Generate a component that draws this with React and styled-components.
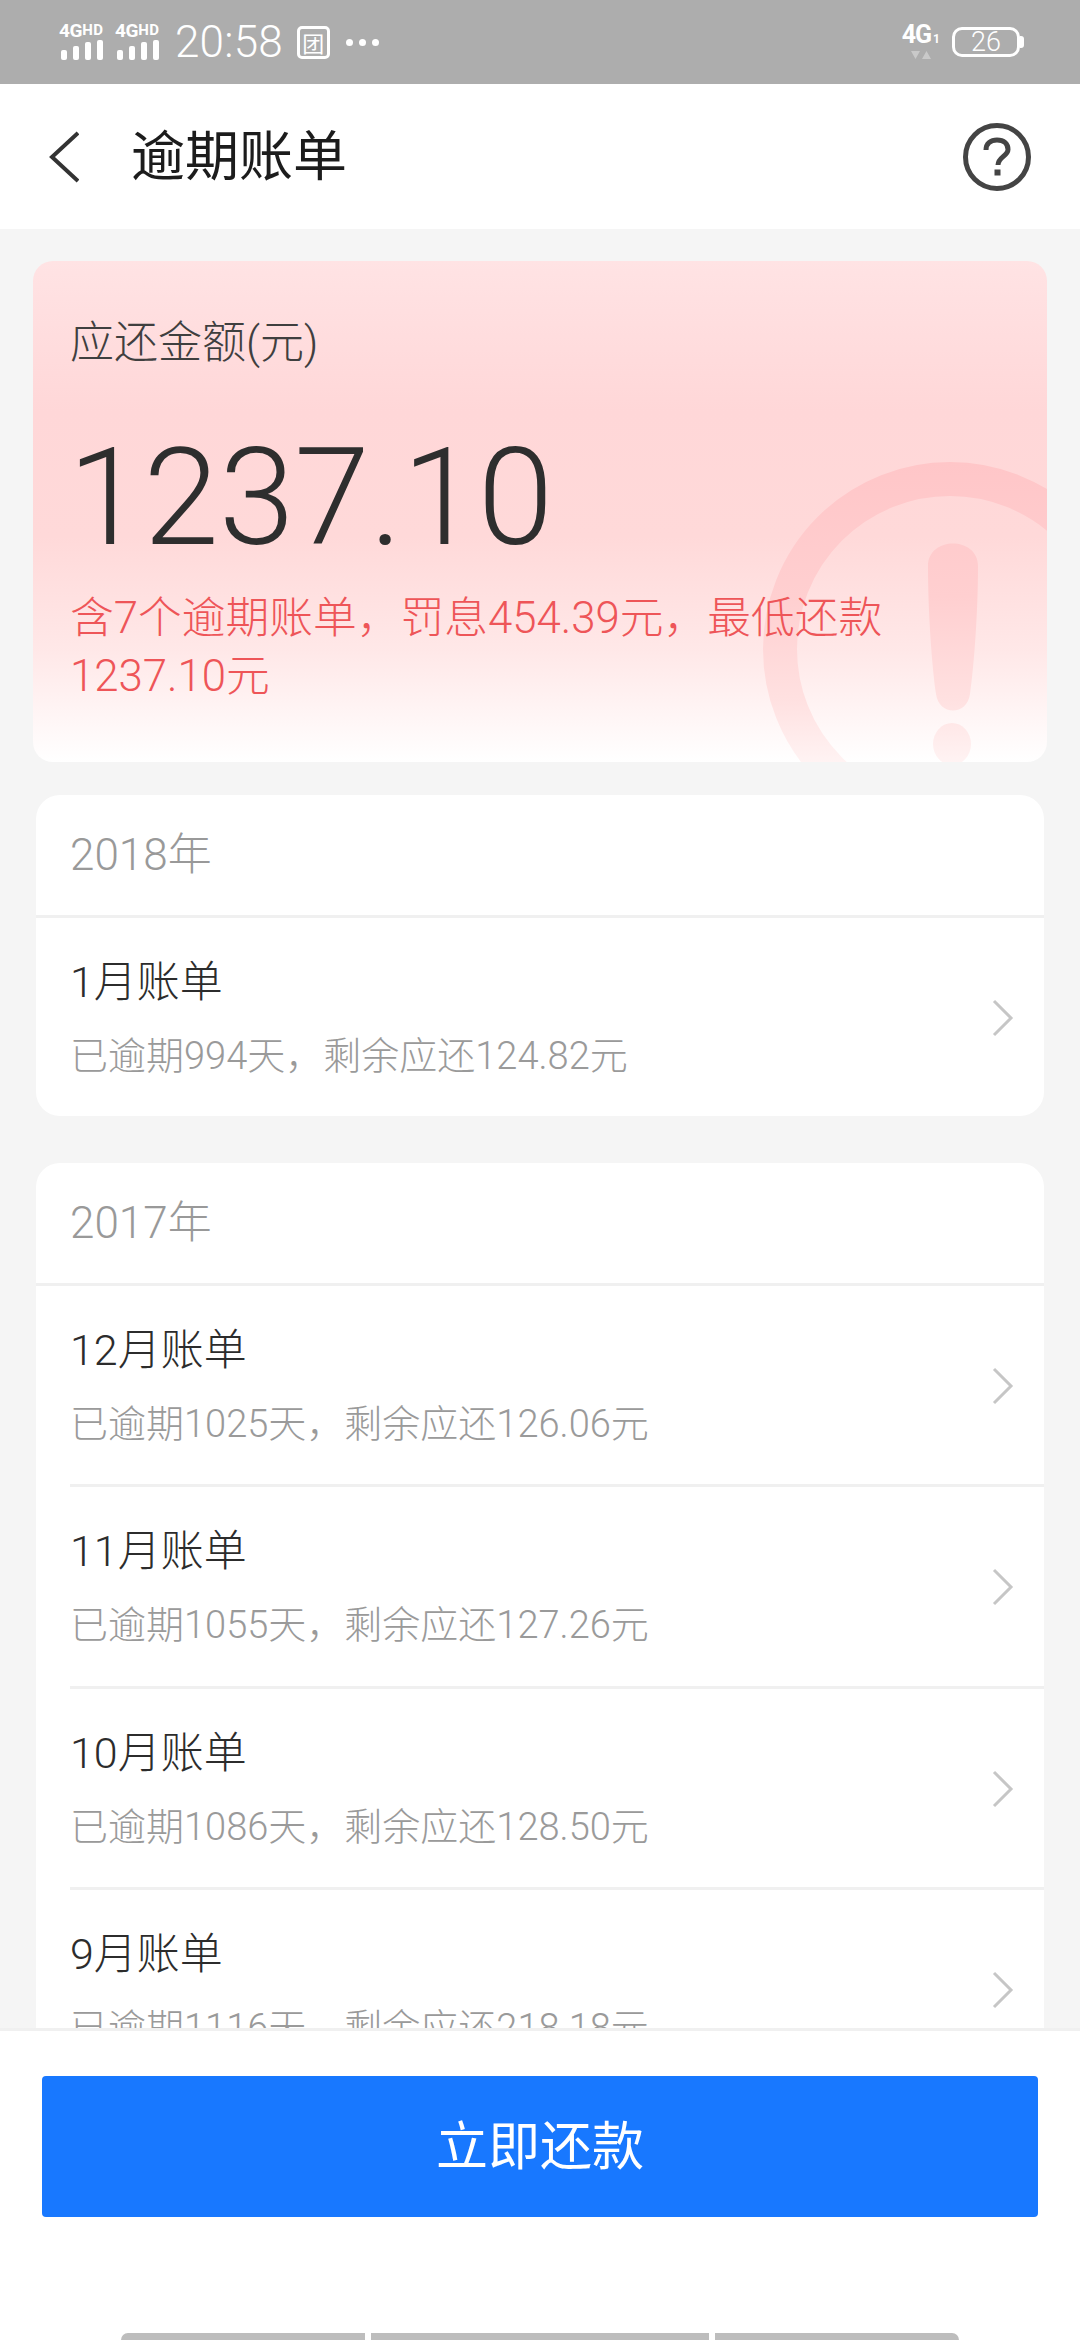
import React from "react";
import styled, { createGlobalStyle } from "styled-components";

const CJK = `"Roboto", "Noto Sans CJK SC", sans-serif`;

const Global = createGlobalStyle`
  html, body { margin: 0; padding: 0; background: #f5f5f5; }
  * { box-sizing: border-box; }
`;

const Screen = styled.div`
  width: 1080px; height: 2340px; display: flex; flex-direction: column;
  overflow: hidden; background: #f5f5f5; font-family: ${CJK};
`;

/* status bar */
const StatusBar = styled.div`
  height: 84px; flex: none; background: #adadad; color: #fff;
  display: flex; align-items: center; justify-content: space-between; padding: 0 60px 0 59px;
`;
const StatusGroup = styled.div`display: flex; align-items: center;`;
const SignalBox = styled.div`
  width: 45px; margin-right: 11px; display: flex; flex-direction: column; margin-top: -4px;
`;
const SignalLabel = styled.div`
  font: 700 19px/18px "Roboto", sans-serif; white-space: nowrap; letter-spacing: -0.3px;
  & > span { font-size: 15px; vertical-align: 2px; letter-spacing: 0.4px; }
`;
const SignalBars = styled.div`display: flex; gap: 6px; align-items: flex-end; height: 20px; padding-left: 2px;`;
const SignalBar = styled.div`width: 6px; height: ${p => p.$h}px; border-radius: 2px; background: #fff;`;
const Time = styled.div`
  font: 300 44px/1 "Roboto", sans-serif; margin-left: 4px; margin-right: 14px; letter-spacing: 0.2px;
`;
const AppBadge = styled.div`
  width: 33px; height: 33px; border: 3px solid #fff; border-radius: 5px; margin-right: 16px;
  display: flex; align-items: center; justify-content: center;
  font: 400 22px/1 "Noto Sans CJK SC", sans-serif;
`;
const Dots = styled.div`display: flex; gap: 6px;`;
const Dot = styled.div`width: 7px; height: 7px; border-radius: 50%; background: #fff;`;
const NetBox = styled.div`display: flex; flex-direction: column; align-items: center; margin-right: 12px;`;
const NetLabel = styled.div`
  font: 700 25px/22px "Roboto", sans-serif; letter-spacing: -1px;
  & > span { font-size: 12px; margin-left: 2px; letter-spacing: 0; }
`;
const Battery = styled.div`
  width: 68px; height: 30px; border: 3px solid #fff; border-radius: 10px; position: relative;
  display: flex; align-items: center; justify-content: center;
  font: 300 27px/1 "Roboto", sans-serif;
  &::after {
    content: ""; position: absolute; right: -7px; top: 6px; width: 4px; height: 12px;
    background: #fff; border-radius: 0 3px 3px 0;
  }
`;

/* header */
const Header = styled.header`
  height: 145px; flex: none; background: #fff; display: flex; align-items: center;
  padding: 0 49px 0 49px;
`;
const HeaderTitle = styled.h1`
  flex: 1; margin: 0 0 0 52px; font: 400 54px/1 "Noto Sans CJK SC", sans-serif; color: #1c1c1c;
  position: relative; top: -4px;
`;

/* content */
const Content = styled.main`flex: 1; min-height: 0; overflow: hidden; padding: 32px 33px 0;`;
const Hero = styled.section`
  position: relative; overflow: hidden; height: 501px; border-radius: 20px; padding: 56px 37px 0;
  background: linear-gradient(180deg, #ffe3e4 0%, #ffd7d8 30%, #ffd9d9 55%, #ffe8e8 78%, #ffffff 100%);
`;
const HeroMark = styled.svg`position: absolute; right: 0; bottom: 0;`;
const HeroLabel = styled.div`
  position: relative; font-size: 44px; line-height: 52px; color: #3f3f3f; font-weight: 300;
`;
const HeroAmount = styled.div`
  position: relative; margin-top: 69px; font: 300 136px/120px "Roboto", sans-serif; color: #2e2e2e;
  margin-left: -2px;
`;
const HeroNote = styled.div`
  position: relative; margin-top: 31px; width: 860px; font-size: 43.75px; line-height: 58px; color: #ee5558;
  font-weight: 300;
`;

const Card = styled.section`
  background: #fff; border-radius: 24px; margin: ${p => p.$top}px 3px 0; overflow: ${p => (p.$open ? "visible" : "hidden")};
`;
const YearRow = styled.div`
  height: 123px; padding: 0 0 8px 34px; display: flex; align-items: center;
  font-size: 44px; color: #999; font-weight: 300; border-bottom: 3px solid #f0f0f0;
`;
const BillList = styled.div`display: flex; flex-direction: column;`;
const BillRow = styled.div`
  height: ${p => p.$h}px; margin-left: 34px; padding: 43px 30px 0 0; display: flex;
  align-items: flex-start; justify-content: space-between;
  border-bottom: ${p => (p.$last ? "none" : "3px solid #f0f0f0")};
`;
const BillText = styled.div`display: flex; flex-direction: column;`;
const BillTitle = styled.div`font-size: 43px; line-height: 43px; color: #2c2c2c; font-weight: 300;`;
const BillSub = styled.div`margin-top: 32px; font-size: 38px; line-height: 40px; color: #9a9a9a; font-weight: 300;`;
const Chevron = styled.svg`flex: none; margin-top: 38px;`;

/* footer */
const Footer = styled.footer`
  height: 312px; flex: none; background: #fff; border-top: 3px solid #f0f0f0;
  padding: 45px 42px 0; display: flex; flex-direction: column;
`;
const PayButton = styled.button`
  height: 141px; border: 0; border-radius: 4px; background: #1878ff; color: #fff;
  font: 400 52px/1 "Noto Sans CJK SC", sans-serif; padding: 0 0 8px; flex: none;
`;
const HomeBars = styled.div`
  margin-top: auto; display: flex; justify-content: center; gap: 6px;
`;
const HomeBar = styled.div`
  width: ${p => p.$w}px; height: 7px; background: #bdbdbd;
  border-radius: ${p => p.$r};
`;

const Signal = () => (
  <SignalBox>
    <SignalLabel>4G<span>HD</span></SignalLabel>
    <SignalBars>
      <SignalBar $h={10} /><SignalBar $h={14} /><SignalBar $h={18} /><SignalBar $h={20} />
    </SignalBars>
  </SignalBox>
);

const ChevronRight = () => (
  <Chevron width="22" height="38" viewBox="0 0 22 38">
    <path d="M2 2 L19 19 L2 36" fill="none" stroke="#c6c6c6" strokeWidth="3" />
  </Chevron>
);

const Bill = ({ title, sub, h, last }) => (
  <BillRow $h={h} $last={last}>
    <BillText>
      <BillTitle>{title}</BillTitle>
      <BillSub>{sub}</BillSub>
    </BillText>
    <ChevronRight />
  </BillRow>
);

export default function App() {
  return (
    <Screen>
      <Global />
      <StatusBar>
        <StatusGroup>
          <Signal />
          <Signal />
          <Time>20:58</Time>
          <AppBadge>团</AppBadge>
          <Dots><Dot /><Dot /><Dot /></Dots>
        </StatusGroup>
        <StatusGroup>
          <NetBox>
            <NetLabel>4G<span>1</span></NetLabel>
            <svg width="20" height="10" viewBox="0 0 20 10">
              <path d="M0 1 H9 L4.5 9 Z M11 9 H20 L15.5 1 Z" fill="#fff" opacity="0.35" />
            </svg>
          </NetBox>
          <Battery>26</Battery>
        </StatusGroup>
      </StatusBar>

      <Header>
        <svg width="30" height="52" viewBox="0 0 30 52">
          <path d="M29 2 L3 26 L29 50" fill="none" stroke="#333" strokeWidth="4" />
        </svg>
        <HeaderTitle>逾期账单</HeaderTitle>
        <svg width="68" height="68" viewBox="0 0 68 68">
          <circle cx="34" cy="34" r="31.5" fill="none" stroke="#444" strokeWidth="5" />
          <path d="M23 27 C23 20 28 17 34 17 C41 17 45 21 45 26.5 C45 33 35 34 35 42" fill="none" stroke="#444" strokeWidth="5" />
          <rect x="31.5" y="46.5" width="6" height="6" fill="#444" />
        </svg>
      </Header>

      <Content>
        <Hero>
          <HeroMark width="284" height="300" viewBox="0 0 284 300">
            <defs>
              <linearGradient id="fade" gradientUnits="userSpaceOnUse" x1="0" y1="0" x2="0" y2="300">
                <stop offset="0" stopColor="#ffc6c8" />
                <stop offset="0.45" stopColor="#ffcfd0" />
                <stop offset="0.8" stopColor="#ffe1e1" />
                <stop offset="1" stopColor="#fff3f3" />
              </linearGradient>
            </defs>
            <circle cx="187" cy="187" r="170" fill="none" stroke="url(#fade)" strokeWidth="34" />
            <path d="M165 104 C165 74 215 74 215 104 C215 150 211 205 207 232 C204 254 176 254 173 232 C169 205 165 150 165 104 Z" fill="url(#fade)" />
            <ellipse cx="189" cy="282" rx="19" ry="21" fill="url(#fade)" />
          </HeroMark>
          <HeroLabel>应还金额(元)</HeroLabel>
          <HeroAmount>1237.10</HeroAmount>
          <HeroNote>含7个逾期账单，罚息454.39元，最低还款1237.10元</HeroNote>
        </Hero>

        <Card $top={33}>
          <YearRow>2018年</YearRow>
          <BillList>
            <Bill title="1月账单" sub="已逾期994天，剩余应还124.82元" h={198} last />
          </BillList>
        </Card>

        <Card $top={47} $open>
          <YearRow>2017年</YearRow>
          <BillList>
            <Bill title="12月账单" sub="已逾期1025天，剩余应还126.06元" h={201} />
            <Bill title="11月账单" sub="已逾期1055天，剩余应还127.26元" h={202} />
            <Bill title="10月账单" sub="已逾期1086天，剩余应还128.50元" h={201} />
            <Bill title="9月账单" sub="已逾期1116天，剩余应还218.18元" h={202} />
          </BillList>
        </Card>
      </Content>

      <Footer>
        <PayButton>立即还款</PayButton>
        <HomeBars>
          <HomeBar $w={244} $r="8px 0 0 0" />
          <HomeBar $w={338} $r="0" />
          <HomeBar $w={244} $r="0 8px 0 0" />
        </HomeBars>
      </Footer>
    </Screen>
  );
}
